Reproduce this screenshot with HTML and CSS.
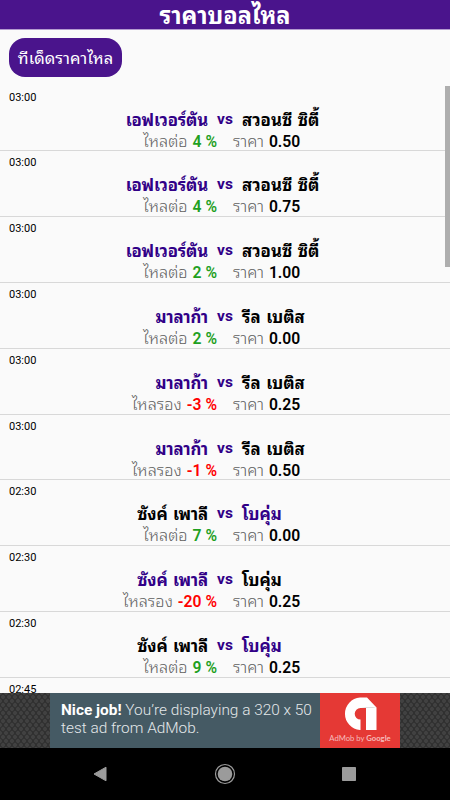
FILE: index.html
```html
<!DOCTYPE html>
<html lang="th">

<head>
  <meta charset="UTF-8" />
  <meta name="viewport" content="width=device-width, initial-scale=1.0" />
  <title>ราคาบอลไหล</title>
  <link rel="stylesheet" href="styles.css">
</head>

<body>
  <header class="title-bar">
    <h1>ราคาบอลไหล</h1>
  </header>
  <div class="toolbar">
    <button class="tips">ทีเด็ดราคาไหล</button>
  </div>

  <main class="matches">
    <div class="match">
      <div class="time">03:00</div>
      <div class="teams"><span class="home fav">เอฟเวอร์ตัน</span><span class="vs">vs</span><span class="away">สวอนซี ซิตี้</span></div>
      <div class="rates"><span class="flow">ไหลต่อ <b class="up">4 %</b></span><span class="price">ราคา <b>0.50</b></span></div>
    </div>
    <div class="match">
      <div class="time">03:00</div>
      <div class="teams"><span class="home fav">เอฟเวอร์ตัน</span><span class="vs">vs</span><span class="away">สวอนซี ซิตี้</span></div>
      <div class="rates"><span class="flow">ไหลต่อ <b class="up">4 %</b></span><span class="price">ราคา <b>0.75</b></span></div>
    </div>
    <div class="match">
      <div class="time">03:00</div>
      <div class="teams"><span class="home fav">เอฟเวอร์ตัน</span><span class="vs">vs</span><span class="away">สวอนซี ซิตี้</span></div>
      <div class="rates"><span class="flow">ไหลต่อ <b class="up">2 %</b></span><span class="price">ราคา <b>1.00</b></span></div>
    </div>
    <div class="match">
      <div class="time">03:00</div>
      <div class="teams"><span class="home fav">มาลาก้า</span><span class="vs">vs</span><span class="away">รีล เบติส</span></div>
      <div class="rates"><span class="flow">ไหลต่อ <b class="up">2 %</b></span><span class="price">ราคา <b>0.00</b></span></div>
    </div>
    <div class="match">
      <div class="time">03:00</div>
      <div class="teams"><span class="home fav">มาลาก้า</span><span class="vs">vs</span><span class="away">รีล เบติส</span></div>
      <div class="rates"><span class="flow">ไหลรอง <b class="down">-3 %</b></span><span class="price">ราคา <b>0.25</b></span></div>
    </div>
    <div class="match">
      <div class="time">03:00</div>
      <div class="teams"><span class="home fav">มาลาก้า</span><span class="vs">vs</span><span class="away">รีล เบติส</span></div>
      <div class="rates"><span class="flow">ไหลรอง <b class="down">-1 %</b></span><span class="price">ราคา <b>0.50</b></span></div>
    </div>
    <div class="match">
      <div class="time">02:30</div>
      <div class="teams"><span class="home">ซังค์ เพาลี</span><span class="vs">vs</span><span class="away fav">โบคุ่ม</span></div>
      <div class="rates"><span class="flow">ไหลต่อ <b class="up">7 %</b></span><span class="price">ราคา <b>0.00</b></span></div>
    </div>
    <div class="match">
      <div class="time">02:30</div>
      <div class="teams"><span class="home fav">ซังค์ เพาลี</span><span class="vs">vs</span><span class="away">โบคุ่ม</span></div>
      <div class="rates"><span class="flow">ไหลรอง <b class="down">-20 %</b></span><span class="price">ราคา <b>0.25</b></span></div>
    </div>
    <div class="match">
      <div class="time">02:30</div>
      <div class="teams"><span class="home">ซังค์ เพาลี</span><span class="vs">vs</span><span class="away fav">โบคุ่ม</span></div>
      <div class="rates"><span class="flow">ไหลต่อ <b class="up">9 %</b></span><span class="price">ราคา <b>0.25</b></span></div>
    </div>
    <div class="match">
      <div class="time">02:45</div>
    </div>
    <div class="scrollbar"></div>
  </main>

  <div class="ad">
    <div class="ad-text"><b>Nice job!</b> You’re displaying a 320 x 50<br>test ad from AdMob.</div>
    <div class="ad-logo">
      <svg width="34" height="34" viewBox="0 0 34 34">
        <path fill="#fff" d="M17 0.5H24L33.5 10.5V33H23V11H17.5A5.8 5.8 0 0 0 17.5 22.6V33H17A16.3 16.3 0 0 1 17 0.5Z" />
        <path fill="#dedede" d="M23 11H33.5L30 10H18Z" />
      </svg>
      <span>AdMob by <b>Google</b></span>
    </div>
  </div>

  <nav class="nav-bar">
    <svg width="14" height="16" viewBox="0 0 14 16">
      <path d="M13 1.2V14.8L1 8Z" fill="#9b9b9b" stroke="#9b9b9b" stroke-linejoin="round" />
    </svg>
    <svg width="22" height="22" viewBox="0 0 22 22">
      <circle cx="11" cy="11" r="9.5" fill="none" stroke="#9b9b9b" stroke-width="1.2" />
      <circle cx="11" cy="11" r="7.3" fill="#9b9b9b" />
    </svg>
    <svg width="14" height="14" viewBox="0 0 14 14">
      <rect width="14" height="14" rx="0.7" fill="#9b9b9b" />
    </svg>
  </nav>
</body>

</html>
```

FILE: styles.css
```css
* {
  box-sizing: border-box;
}

body {
  margin: 0;
  height: 800px;
  display: flex;
  flex-direction: column;
  overflow: hidden;
  background: #fafafa;
  color: #000;
  font-family: Roboto, "Noto Sans Thai Looped", "Noto Sans", sans-serif;
}

.title-bar {
  height: 29px;
  flex: none;
  background: #4a148c;
  box-shadow: 0 1px 0 #b39bcf;
  text-align: center;
}

.title-bar h1 {
  margin: 0;
  color: #fff;
  font-size: 23.5px;
  line-height: 33px;
}

.toolbar {
  height: 56.6px;
  flex: none;
  padding: 9px 9px 0;
}

.tips {
  display: block;
  width: 113px;
  height: 39px;
  padding: 0;
  border: 0;
  border-radius: 16px;
  background: #4a148c;
  color: #fff;
  font: 16.5px/41px Roboto, "Noto Sans Thai Looped", "Noto Sans", sans-serif;
  white-space: nowrap;
}

.matches {
  position: relative;
  flex: 1;
  min-height: 0;
  overflow: hidden;
}

.match {
  height: 65.8px;
  padding-top: 4px;
  border-bottom: 1px solid #d8d8d8;
  white-space: nowrap;
}

.time {
  padding-left: 9px;
  font-size: 11px;
  line-height: 15px;
}

.teams {
  display: grid;
  grid-template-columns: 208px 34px 1fr;
  margin-top: 4px;
  height: 22px;
  line-height: 22px;
  font-size: 16.8px;
  font-weight: 700;
  word-spacing: 1.5px;
}

.home {
  text-align: right;
  letter-spacing: -0.2px;
}

.vs {
  text-align: center;
  font-size: 15.5px;
  line-height: 20px;
}

.fav,
.vs {
  color: #310087;
}

.rates {
  display: grid;
  grid-template-columns: 217px 1fr;
  column-gap: 16px;
  height: 20px;
  line-height: 22px;
  font-size: 16.4px;
  font-weight: 300;
  color: #606060;
  word-spacing: 1px;
}

.rates b {
  font-size: 15.7px;
  font-weight: 600;
  word-spacing: 0;
}

.flow {
  text-align: right;
}

.up {
  color: #1fa01f;
}

.down {
  color: #f00;
}

.price b {
  color: #000;
}

.scrollbar {
  position: absolute;
  top: 0;
  right: 0;
  width: 5px;
  height: 181px;
  background: #aeaeae;
}

.ad {
  height: 55px;
  flex: none;
  display: flex;
  justify-content: center;
  background-color: #303030;
  background-image: radial-gradient(#414141 1.5px, transparent 2px), radial-gradient(#414141 1.5px, transparent 2px);
  background-size: 6px 8px;
  background-position: 0 0, 3px 4px;
}

.ad-text {
  width: 270px;
  padding: 8px 0 0 11px;
  background: #455a64;
  color: #e4e8ea;
  font-size: 15.4px;
  font-weight: 300;
  line-height: 18px;
  white-space: nowrap;
}

.ad-text b {
  color: #fff;
  font-weight: 700;
}

.ad-logo {
  width: 80px;
  padding: 4px 0 0;
  display: flex;
  flex-direction: column;
  align-items: center;
  background: #e53935;
  color: #f6bcbb;
  font: 7.7px/14px Lato, sans-serif;
  white-space: nowrap;
}

.nav-bar {
  height: 52px;
  flex: none;
  display: flex;
  justify-content: space-between;
  align-items: center;
  padding: 0 94px 0 93px;
  background: #000;
}
```
